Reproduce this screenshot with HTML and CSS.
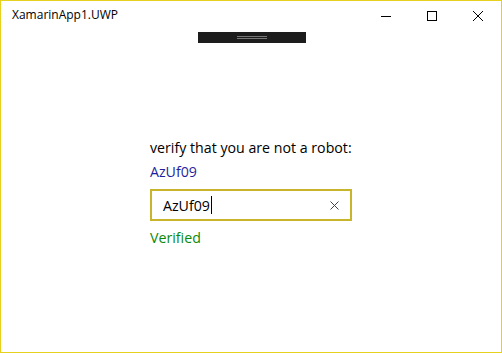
FILE: index.html
```html
<!DOCTYPE html>
<html>
<head>
<meta charset="utf-8">
<link rel="stylesheet" href="styles.css">
</head>
<body>
<div class="window">
  <div class="titlebar">
    <div class="title">XamarinApp1.UWP</div>
    <div class="controls">
      <div class="ctl">
        <svg width="10" height="10" viewBox="0 0 10 10"><path d="M0 5.5H10" stroke="#000" stroke-width="1"/></svg>
      </div>
      <div class="ctl">
        <svg width="10" height="10" viewBox="0 0 10 10"><rect x="0.5" y="0.5" width="9" height="9" fill="none" stroke="#000" stroke-width="1"/></svg>
      </div>
      <div class="ctl">
        <svg width="10" height="10" viewBox="0 0 10 10"><path d="M0 0L10 10M10 0L0 10" stroke="#000" stroke-width="1"/></svg>
      </div>
    </div>
  </div>
  <div class="handle-row">
    <div class="handle">
      <div class="grip"></div>
      <div class="grip"></div>
    </div>
  </div>
  <div class="content">
    <div class="stack">
      <div class="prompt">verify that you are not a robot:</div>
      <div class="code">AzUf09</div>
      <div class="textbox">
        <span class="value">AzUf09</span><span class="caret"></span>
        <span class="spacer"></span>
        <svg class="clear" width="9" height="9" viewBox="0 0 9 9"><path d="M0.5 0.5L8.5 8.5M8.5 0.5L0.5 8.5" stroke="#444" stroke-width="1"/></svg>
      </div>
      <div class="status">Verified</div>
    </div>
  </div>
</div>
</body>
</html>
```
FILE: styles.css
```css
html, body {
  margin: 0;
  padding: 0;
  background: #fff;
}
body {
  font-family: "Segoe UI", "Open Sans", "Noto Sans", sans-serif;
}
.window {
  width: 502px;
  height: 353px;
  box-sizing: border-box;
  border: 1px solid #e6d21e;
  display: flex;
  flex-direction: column;
}
.titlebar {
  height: 31px;
  display: flex;
  align-items: center;
  justify-content: space-between;
}
.title {
  font-size: 12px;
  color: #000;
  padding-left: 11px;
  margin-top: -4px;
}
.controls {
  display: flex;
  align-self: stretch;
}
.ctl {
  width: 46px;
  display: flex;
  align-items: center;
  justify-content: center;
  margin-top: -2px;
}
.handle-row {
  display: flex;
  justify-content: center;
}
.handle {
  width: 108px;
  height: 11px;
  background: #1c1c1c;
  display: flex;
  flex-direction: column;
  align-items: center;
  justify-content: center;
  gap: 1px;
  margin-left: 2px;
}
.grip {
  width: 30px;
  height: 1px;
  background: #777;
}
.content {
  flex: 1;
  display: flex;
  justify-content: center;
}
.stack {
  width: 202px;
  margin-top: 95px;
  display: flex;
  flex-direction: column;
}
.prompt {
  font-size: 14.2px;
  line-height: 20px;
  color: #000;
  white-space: nowrap;
}
.code {
  margin-top: 4px;
  font-size: 14.2px;
  line-height: 20px;
  color: #1f1f9e;
}
.textbox {
  margin-top: 7px;
  height: 32px;
  box-sizing: border-box;
  border: 2px solid #c9b52c;
  display: flex;
  align-items: center;
  padding: 0 11px 0 11px;
}
.value {
  font-size: 14.2px;
  color: #000;
}
.caret {
  width: 1px;
  height: 18px;
  background: #000;
  margin-left: 1px;
}
.spacer {
  flex: 1;
}
.clear {
  display: block;
}
.status {
  margin-top: 7px;
  font-size: 14.2px;
  line-height: 20px;
  color: #0a8a0a;
}
```
